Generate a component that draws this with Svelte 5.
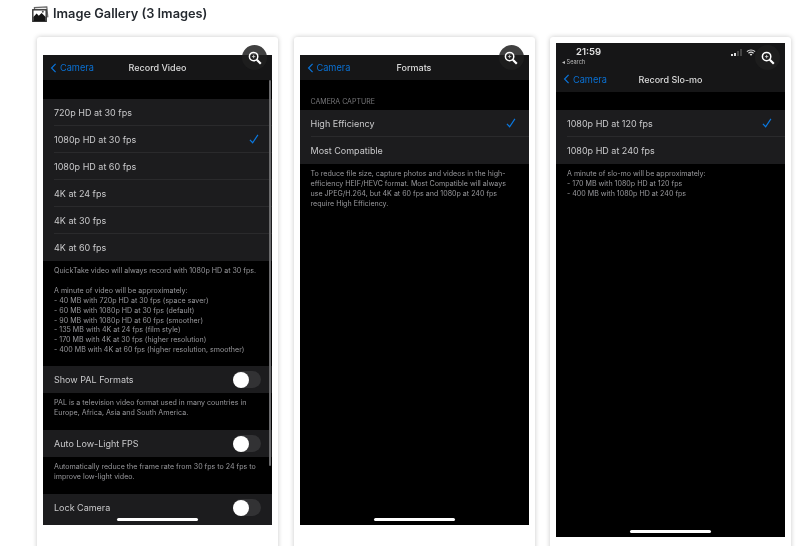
<script>
  const shots = [
    {
      title: "Record Video",
      tall: false,
      scrollbar: true,
      blocks: [
        { gap: 19, rows: [
          { label: "720p HD at 30 fps" },
          { label: "1080p HD at 30 fps", check: true },
          { label: "1080p HD at 60 fps" },
          { label: "4K at 24 fps" },
          { label: "4K at 30 fps" },
          { label: "4K at 60 fps" },
        ], note: [
          "QuickTake video will always record with 1080p HD at 30 fps.",
          "",
          "A minute of video will be approximately:",
          "- 40 MB with 720p HD at 30 fps (space saver)",
          "- 60 MB with 1080p HD at 30 fps (default)",
          "- 90 MB with 1080p HD at 60 fps (smoother)",
          "- 135 MB with 4K at 24 fps (film style)",
          "- 170 MB with 4K at 30 fps (higher resolution)",
          "- 400 MB with 4K at 60 fps (higher resolution, smoother)",
        ], noteHeight: 105 },
        { rows: [{ label: "Show PAL Formats", toggle: true }], note: [
          "PAL is a television video format used in many countries in",
          "Europe, Africa, Asia and South America.",
        ], noteHeight: 37 },
        { rows: [{ label: "Auto Low-Light FPS", toggle: true }], note: [
          "Automatically reduce the frame rate from 30 fps to 24 fps to",
          "improve low-light video.",
        ], noteHeight: 37 },
        { rows: [{ label: "Lock Camera", toggle: true, bleed: true }], note: [], noteHeight: 0 },
      ],
    },
    {
      title: "Formats",
      tall: false,
      blocks: [
        { gap: 30, heading: "CAMERA CAPTURE", rows: [
          { label: "High Efficiency", check: true },
          { label: "Most Compatible" },
        ], note: [
          "To reduce file size, capture photos and videos in the high-",
          "efficiency HEIF/HEVC format. Most Compatible will always",
          "use JPEG/H.264, but 4K at 60 fps and 1080p at 240 fps",
          "require High Efficiency.",
        ], noteHeight: 50 },
      ],
    },
    {
      title: "Record Slo-mo",
      tall: true,
      blocks: [
        { gap: 18, rows: [
          { label: "1080p HD at 120 fps", check: true },
          { label: "1080p HD at 240 fps" },
        ], note: [
          "A minute of slo-mo will be approximately:",
          "- 170 MB with 1080p HD at 120 fps",
          "- 400 MB with 1080p HD at 240 fps",
        ], noteHeight: 40 },
      ],
    },
  ];
</script>

<div class="page">
  <h2 class="heading">
    <svg class="gallery-icon" viewBox="0 0 17 16" width="17" height="16" aria-hidden="true">
      <path d="M2.6 4.4 L2.4 1.6 L14.8 0.8 L15.8 10.8 L14 11" fill="#ececec" stroke="#666" stroke-width="1.2" />
      <rect x="0.8" y="3.8" width="13.4" height="11.6" fill="#fff" stroke="#333" stroke-width="1.4" />
      <path d="M1.4 15 V11 L4.6 7.6 L6.8 9.8 L9.6 7 L13.6 11 V15 Z" fill="#141414" />
      <circle cx="10.8" cy="5.8" r="1" fill="#555" />
    </svg>
    Image Gallery (3 Images)
  </h2>

  <div class="gallery">
    {#each shots as shot}
      <div class="card">
        <div class="shot" class:tall={shot.tall}>
          {#if shot.tall}
            <div class="status">
              <div class="clock">
                <div class="time">21:59</div>
                <div class="back-app">◂ Search</div>
              </div>
              <div class="status-icons">
                <svg viewBox="0 0 11 7" width="11" height="7" aria-hidden="true">
                  <rect x="0" y="5" width="2" height="2" fill="#ddd" />
                  <rect x="3" y="4" width="2" height="3" fill="#ddd" />
                  <rect x="6" y="2" width="2" height="5" fill="#444" />
                  <rect x="9" y="0" width="2" height="7" fill="#444" />
                </svg>
                <svg viewBox="0 0 11 8" width="10" height="7" aria-hidden="true">
                  <path d="M0.8 3 A7 7 0 0 1 10.2 3 M2.6 4.8 A4.4 4.4 0 0 1 8.4 4.8" fill="none" stroke="#ddd" stroke-width="1.3" />
                  <path d="M4 6.2 A2 2 0 0 1 7 6.2 L5.5 7.8 Z" fill="#ddd" />
                </svg>
              </div>
            </div>
          {/if}
          <div class="nav">
            <span class="back">
              <svg viewBox="0 0 7 12" width="7" height="10" aria-hidden="true">
                <path d="M6 1 L1.2 6 L6 11" fill="none" stroke="#0a72d6" stroke-width="1.5" />
              </svg>
              Camera
            </span>
            <span class="title">{shot.title}</span>
          </div>

          {#each shot.blocks as block}
            <div class="spacer" style="height: {block.gap ?? 0}px">
              {#if block.heading}<span class="section">{block.heading}</span>{/if}
            </div>
            {#each block.rows as row, i}
              <div class="row" class:bleed={row.bleed}>
                <span class="row-inner" class:last={i === block.rows.length - 1}>
                  <span>{row.label}</span>
                  {#if row.check}
                    <svg class="check" viewBox="0 0 11 11" width="10" height="10" aria-hidden="true">
                      <path d="M1 6.4 L4 9.6 L9.8 1" fill="none" stroke="#0a78e0" stroke-width="1.3" />
                    </svg>
                  {/if}
                  {#if row.toggle}
                    <span class="toggle"><span class="knob"></span></span>
                  {/if}
                </span>
              </div>
            {/each}
            {#if block.note.length}
              <div class="note" style="height: {block.noteHeight}px">
                {#each block.note as line}
                  <div class="note-line">{line}</div>
                {/each}
              </div>
            {/if}
          {/each}

          {#if shot.scrollbar}<span class="scrollbar"></span>{/if}
          <span class="home"></span>
        </div>

        <button class="zoom" aria-label="Zoom image">
          <svg viewBox="0 0 14 14" width="14" height="14" aria-hidden="true">
            <circle cx="5.6" cy="5.6" r="4.2" fill="none" stroke="#fff" stroke-width="1.5" />
            <path d="M3.9 5.6 H7.3 M5.6 3.9 V7.3" stroke="#ddd" stroke-width="0.8" />
            <path d="M8.8 8.8 L12.8 12.8" stroke="#fff" stroke-width="2.2" />
          </svg>
        </button>
      </div>
    {/each}
  </div>
</div>

<style>
  :global(body) {
    margin: 0;
    background: #fff;
    overflow: hidden;
  }

  .page {
    height: 546px;
    overflow: hidden;
    font-family: Inter, "Liberation Sans", sans-serif;
    padding-left: 32px;
  }

  .heading {
    display: flex;
    align-items: center;
    gap: 4px;
    margin: 0;
    height: 27px;
    font-size: 12.8px;
    font-weight: 600;
    color: #24292f;
    filter: blur(0.25px);
  }

  .gallery {
    display: grid;
    grid-template-columns: repeat(3, 241px);
    gap: 15.5px;
    margin: 10px 0 0 5px;
  }

  .card {
    position: relative;
    height: 530px;
    padding: 6px;
    box-sizing: border-box;
    background: #fff;
    border-radius: 3px;
    box-shadow: 0 0 5px rgba(0, 0, 0, 0.22);
  }

  .shot {
    position: relative;
    width: 229px;
    height: 470px;
    margin-top: 12px;
    overflow: hidden;
    background: #000;
    color: #c9c9cb;
    filter: blur(0.45px);
  }

  .shot.tall {
    height: 494px;
    margin-top: 0;
  }

  .status {
    display: flex;
    justify-content: space-between;
    align-items: center;
    height: 25px;
    padding: 0 29px 0 6px;
    background: #161617;
  }

  .time {
    margin-left: 14px;
    font-size: 9.5px;
    font-weight: 600;
    color: #e2e2e2;
  }

  .back-app {
    font-size: 5.6px;
    margin-top: 2px;
    color: #bbb;
  }

  .status-icons {
    display: flex;
    align-items: center;
    gap: 4px;
    margin-top: -7px;
  }

  .nav {
    position: relative;
    display: flex;
    justify-content: center;
    align-items: center;
    height: 25px;
    background: #161617;
  }

  .tall .nav {
    height: 24px;
    box-sizing: border-box;
    padding-bottom: 2px;
  }

  .back {
    position: absolute;
    left: 7px;
    display: flex;
    align-items: center;
    gap: 3px;
    font-size: 9.2px;
    color: #0a72d6;
  }

  .title {
    font-size: 9px;
    font-weight: 500;
    color: #dcdcdc;
  }

  .spacer {
    position: relative;
  }

  .section {
    position: absolute;
    left: 11px;
    bottom: 4px;
    font-size: 7px;
    color: #77777a;
  }

  .row {
    height: 27px;
    padding-left: 11px;
    background: #1c1c1e;
    font-size: 9px;
  }

  .row.bleed {
    padding-bottom: 5px;
  }

  .row-inner {
    display: flex;
    justify-content: space-between;
    align-items: center;
    height: 100%;
    box-sizing: border-box;
    padding-right: 11px;
    border-bottom: 1px solid #2a2a2c;
  }

  .row-inner.last {
    border-bottom: none;
  }

  .check {
    margin-right: 2px;
  }

  .toggle {
    position: relative;
    width: 28px;
    height: 17px;
    border-radius: 9px;
    background: #323234;
  }

  .knob {
    position: absolute;
    left: 0;
    top: 0.5px;
    width: 16px;
    height: 16px;
    border-radius: 50%;
    background: #fff;
  }

  .note {
    padding: 5px 11px 0;
    box-sizing: border-box;
    font-size: 7.1px;
    line-height: 9.9px;
    color: #98989c;
  }

  .note-line {
    min-height: 9.9px;
    white-space: nowrap;
  }

  .scrollbar {
    position: absolute;
    right: 1px;
    top: 25px;
    width: 2px;
    height: 386px;
    border-radius: 1px;
    background: #6a6a6c;
  }

  .home {
    position: absolute;
    left: 74px;
    bottom: 4px;
    width: 81px;
    height: 3px;
    border-radius: 2px;
    background: #fff;
  }

  .zoom {
    position: absolute;
    right: 11px;
    top: 8px;
    display: flex;
    align-items: center;
    justify-content: center;
    width: 25px;
    height: 25px;
    padding: 0;
    border: none;
    border-radius: 50%;
    background: rgba(30, 30, 30, 0.85);
  }
</style>
